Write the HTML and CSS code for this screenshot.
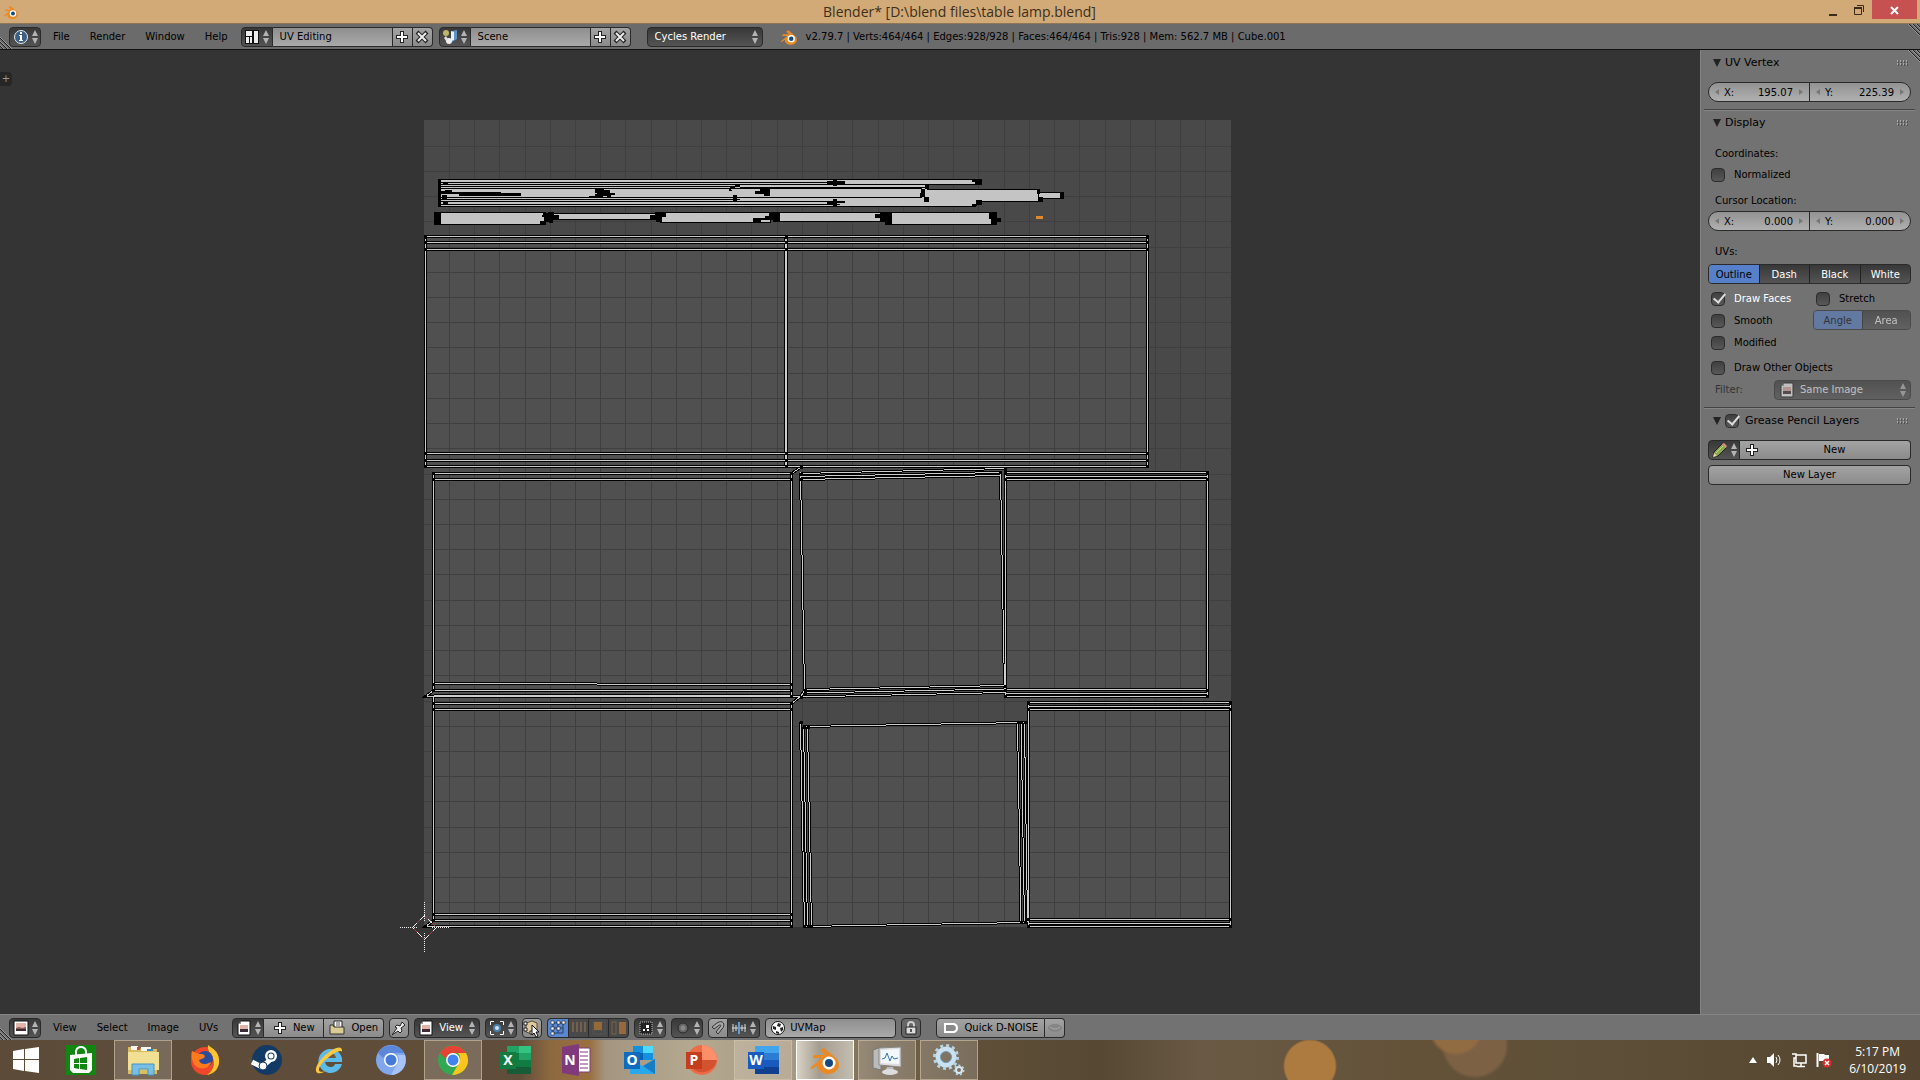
FILE: index.html
```html
<!DOCTYPE html>
<html lang="en">
<head>
<meta charset="utf-8">
<title>Blender* [D:\blend files\table lamp.blend]</title>
<link rel="stylesheet" href="styles.css">
</head>
<body>
<svg class="defs" aria-hidden="true">
  <symbol id="updown" viewBox="0 0 6 14"><path d="M3 0L6 6H0zM0 8H6L3 14z" fill="#b4b4b4"/></symbol>
  <symbol id="plus" viewBox="0 0 14 14"><path d="M5 1h4v4h4v4H9v4H5V9H1V5h4z" fill="#222"/><path d="M6 2h2v4h4v2H8v4H6V8H2V6h4z" fill="#fff"/></symbol>
  <symbol id="cross" viewBox="0 0 14 14"><path d="M2 2l10 10M12 2L2 12" stroke="#222" stroke-width="4"/><path d="M3 3l8 8M11 3l-8 8" stroke="#eee" stroke-width="2"/></symbol>
  <symbol id="blender" viewBox="0 0 32 32"><path d="M1 24L13 14H4l1-3h11l-5-5 4-2 12 10c4 4 4 10 0 13-4 4-12 4-16 0-2-2-3-4-2-6l-6 4z" fill="#e98a26"/><circle cx="20" cy="19" r="6.500" fill="#fff"/><circle cx="20" cy="19" r="4" fill="#174a7c"/></symbol>
  <symbol id="image" viewBox="0 0 16 16"><path d="M1 1h14v14H1z" fill="#fff" stroke="#111"/><path d="M3 3h10v5H3z" fill="#e3b3a9"/><path d="M3 8h10v3H3z" fill="#3c2b35"/><path d="M3 8l3-1 3 1 4-1v2H3z" fill="#8a5a57"/></symbol>
  <symbol id="imagefile" viewBox="0 0 16 16"><path d="M5 1h9v14H2V4z" fill="#fff" stroke="#111"/><path d="M4 5h8v4H4z" fill="#e3b3a9"/><path d="M4 9h8v3H4z" fill="#3c2b35"/><path d="M5 1v3H2z" fill="#999"/></symbol>
  <symbol id="grip" viewBox="0 0 12 12"><path d="M0 1l11 11M0 5l7 7M0 9l3 3" stroke="#222"/><path d="M0 0l12 12M0 4l8 8M0 8l4 4" stroke="#aaa" stroke-width=".7"/></symbol>
  <symbol id="gripup" viewBox="0 0 12 12"><path d="M1 0l11 11M5 0l7 7M9 0l3 3" stroke="#222"/><path d="M0 0l12 12M4 0l8 8M8 0l4 4" stroke="#aaa" stroke-width=".7"/></symbol>
  <symbol id="dots" viewBox="0 0 12 6"><path d="M0 1h1m2 0h1m2 0h1m2 0h1M0 4h1m2 0h1m2 0h1m2 0h1" stroke="#ddd" stroke-width="1"/><path d="M1 2h1m2 0h1m2 0h1m2 0h1M1 5h1m2 0h1m2 0h1m2 0h1" stroke="#333"/></symbol>
</svg>

<header class="titlebar">
  <svg class="i16"><use href="#blender"/></svg>
  <h1>Blender* [D:\blend files\table lamp.blend]</h1>
  <div class="winbtns">
    <button aria-label="Minimize"><svg width="10" height="12"><path d="M1 10h8v2H1z" fill="#3a2c1a"/></svg></button>
    <button aria-label="Restore"><svg width="10" height="10"><path d="M.5 2.500h7v7h-7zM3 .5h6.500V7" fill="none" stroke="#3a2c1a"/><path d="M0 2h8v2H0z" fill="#3a2c1a"/></svg></button>
    <button class="close" aria-label="Close"><svg width="10" height="10"><path d="M1 2l7 7M8 2L1 9" stroke="#fff" stroke-width="2"/></svg></button>
  </div>
</header>

<div class="bar info">
  <svg class="grip left"><use href="#grip"/></svg>
  <button class="dark picker" aria-label="Editor type: Info"><svg class="i16" viewBox="0 0 16 16"><circle cx="8" cy="8" r="6.500" fill="#3c6085" stroke="#dfe8f0"/><path d="M6 6h3v5h1v1H6v-1h1V7H6zM7 3h2v2H7z" fill="#fff"/></svg><svg class="ud"><use href="#updown"/></svg></button>
  <nav class="menus"><button>File</button><button>Render</button><button>Window</button><button>Help</button></nav>
  <div class="group">
    <button class="dark picker" aria-label="Screen layout"><svg class="i16" viewBox="0 0 16 16"><path d="M1 1h14v14H1z" fill="#111"/><path d="M2 2h6v5H2zM2 8h3v6H2zM6 8h2v6H6zM10 2h4v12h-4z" fill="#eee"/></svg><svg class="ud"><use href="#updown"/></svg></button>
    <input class="field name" aria-label="Screen name" value="UV Editing">
    <button class="light sq" aria-label="Add screen"><svg class="i14"><use href="#plus"/></svg></button>
    <button class="light sq" aria-label="Delete screen"><svg class="i14"><use href="#cross"/></svg></button>
  </div>
  <div class="group scene">
    <button class="dark picker" aria-label="Scene"><svg class="i16" viewBox="0 0 16 16"><circle cx="4" cy="4" r="3" fill="#bdb76a"/><path d="M10 2l5-1v9l-5 3z" fill="#5f93c4"/><path d="M9 2l3 1v8l-3 1z" fill="#e6f1fb"/><circle cx="7" cy="12" r="3" fill="#eee"/><path d="M2 9l2-2 2 3-2 2z" fill="#ddd"/></svg><svg class="ud"><use href="#updown"/></svg></button>
    <input class="field name" aria-label="Scene name" value="Scene">
    <button class="light sq" aria-label="Add scene"><svg class="i14"><use href="#plus"/></svg></button>
    <button class="light sq" aria-label="Delete scene"><svg class="i14"><use href="#cross"/></svg></button>
  </div>
  <div class="dark drop engine"><select aria-label="Render engine"><option>Cycles Render</option></select><svg class="ud"><use href="#updown"/></svg></div>
  <svg class="i18 logo"><use href="#blender"/></svg>
  <p class="stats">v2.79.7 | Verts:464/464 | Edges:928/928 | Faces:464/464 | Tris:928 | Mem: 562.7 MB | Cube.001</p>
  <svg class="grip right"><use href="#gripup"/></svg>
</div>

<div class="work">
  <main class="canvas">
    <button class="toolshelf" aria-label="Open tool shelf">+</button>
    <svg class="uv" viewBox="0 50 1700 964" role="img" aria-label="UV layout">
      <path fill="#494949" d="M424 120h807v807H424z"/>
      <path fill="#505050" d="M425 236H1147V467H425zM433 467H792V927H433zM800 473L1005 469V692L805 697zM1005 473h203v224h-203zM804 727l220-4 4 200-220 4zM1028 703h203v224h-203z"/>
      <path class="gridlines" d="M449.500 120v807M474.500 120v807M499.500 120v807M525.500 120v807M550.500 120v807M575.500 120v807M600.500 120v807M625.500 120v807M651.500 120v807M676.500 120v807M701.500 120v807M726.500 120v807M751.500 120v807M777.500 120v807M802.500 120v807M827.500 120v807M852.500 120v807M878.500 120v807M903.500 120v807M928.500 120v807M953.500 120v807M978.500 120v807M1004.500 120v807M1029.500 120v807M1054.500 120v807M1079.500 120v807M1105.500 120v807M1130.500 120v807M1155.500 120v807M1180.500 120v807M1205.500 120v807M424 146.500h807M424 171.500h807M424 196.500h807M424 221.500h807M424 247.500h807M424 272.500h807M424 297.500h807M424 322.500h807M424 347.500h807M424 373.500h807M424 398.500h807M424 423.500h807M424 448.500h807M424 474.500h807M424 499.500h807M424 524.500h807M424 549.500h807M424 574.500h807M424 600.500h807M424 625.500h807M424 650.500h807M424 675.500h807M424 701.500h807M424 726.500h807M424 751.500h807M424 776.500h807M424 801.500h807M424 827.500h807M424 852.500h807M424 877.500h807M424 902.500h807"/>
      <defs><path id="edges" d="M425.500 236.500H1147.500V466.500H425.500zM425.500 242.500H1147.500M425.500 249.500H1147.500M425.500 453.500H1147.500M425.500 460.500H1147.500M785.500 236V467M786.500 236V467
        M791.500 473.500H433.500V690.500L425.500 696.500H800.500M433.500 479.500H791.500M791.500 473.500V696.500M791.500 473.500L800.500 467.500M433.500 683.500H597M597 684.500H791.500M433.500 690.500H791.500M433.500 695.500H791.500M800.500 696.500L791.500 703.500H433.500M433.500 709.500H791.500M433.500 696.500V920.500L425.500 926.500H791.500M791.500 703.500V926.500M433.500 914.500H791.500M433.500 920.500H791.500
        M800.500 473.500L1005.500 468.500M800.500 476.500L1000.500 472.500M800.500 479.500L1000.500 475.500M800.500 472.500L804.500 690.500L800.500 697M1000.500 472.500L1004.500 690M804.500 689.500L1005.500 685.500M804.500 693L1005.500 689M800.500 697L1005.500 692.500
        M1005.500 472.500H1207.500V696.500H1005.500zM1005.500 476.500H1207.500M1005.500 479.500H1207.500M1005.500 689.500H1207.500M1005.500 693.500H1207.500
        M800.500 722V724L804.500 926.500L1024.500 922.500M803.500 726.500L1024.500 722.500M803.500 726.500L807.500 926.500M807.500 726.500L811.500 926.500M1017.500 722.500L1021 922.500M1021 722.500L1024.500 922.500M1024.500 722.500L1027.500 922.500
        M1028.500 702.500H1230.500V926.500H1028.500zM1028.500 706.500H1230.500M1028.500 709.500H1230.500M1028.500 919.500H1230.500M1028.500 923.500H1230.500"/></defs>
      <use href="#edges" class="edge-outer"/><use href="#edges" class="edge-inner"/>
      <path class="vertex" d="M425 237h0M425 242h0M425 249h0M425 453h0M425 460h0M425 466h0M786 237h0M786 242h0M786 249h0M786 453h0M786 460h0M786 466h0M1147 237h0M1147 242h0M1147 249h0M1147 453h0M1147 460h0M1147 466h0M433 473h0M433 479h0M791 473h0M791 479h0M433 684h0M433 690h0M425 696h0M791 684h0M791 690h0M791 696h0M801 697h0M433 703h0M433 709h0M791 703h0M791 709h0M433 914h0M433 920h0M425 926h0M791 914h0M791 920h0M791 926h0M801 467h0M801 474h0M801 479h0M805 690h0M805 693h0M1000 472h0M1005 469h0M1005 473h0M1005 479h0M1005 686h0M1005 690h0M1005 696h0M1207 473h0M1207 479h0M1207 690h0M1207 696h0M801 722h0M804 727h0M808 727h0M804 926h0M808 926h0M811 926h0M1018 722h0M1021 722h0M1025 722h0M1021 922h0M1025 922h0M1028 703h0M1028 709h0M1028 919h0M1028 926h0M1230 703h0M1230 709h0M1230 919h0M1230 926h0"/>
      <path class="strip" d="M439.500 179.500H981.500V184.500H927.500V189.500H1038.500V192.500H1062.500V198.500H1041.500V201.500H980.500L975.500 206.500H439.500z"/>
      <path class="stripline" d="M440 182.500H840M440 184.500H980M440 186.500H740M740 187.500H927M440 188.500H922M440 197.500H922M440 199.500H740M440 201.500H840M440 204.500H840M1038.500 190V201"/>
      <path class="strip" d="M435.500 212.500H545.500V224.500H435.500zM550.500 213.500H658.500V219.500H550.500zM660.500 212.500H770.500V222.500H660.500zM779.500 212.500H880.500V221.500H779.500zM889.500 212.500H992.500V224.500H889.500z"/>
      <path d="M438 179h3v28h-3zM443 182h5v2h-5zM445 190h7v2h49v1h20v3h-62v-2h-18v-3h4zM442 195h5v4h-5zM443 202h5v3h-5zM595 189h4l5-1v2h6v3h5v2h-4v3h-4v-2h-4v1h-6v-4h-2zM588 196h7v-2h3v3h-8zM730 187h10v-2h-5v3h-6v3h3zM733 195h4v6h-4zM755 191h5v-2h10v7h-6v-2h-9zM827 181h6v-2h4v2h8v3h-8v2h-4v-2h-6zM827 201h6v-2h4v2h8v2h-8v3h-4v-2h-6zM972 179h10v5h-7v-2h-3zM921 189h4v8h-5v-4h1zM924 197h5v5h-5zM925 185h4v4h-4zM1037 189h3v5h-3zM1039 197h4v5h-4zM1060 192h4v7h-4zM972 204h4v-4h6v5h-6v2h-4zM434 212h7v13h-7zM543 213h5v-1h6v3h5v4h-6v4h-4v-1h-4v3h-5v-4h4v-4h-2zM650 215h5v-3h11v5h-4v5h-6v-3h-6zM753 218h12v-2h4v-4h11v10h-7v-2h-12v2h-8zM875 214h5v-2h12v13h-7v-3h-5v-4h-5zM989 212h8v6h4v4h-4v3h-6v-6h-2z"/>
      <path d="M1036 216h7v3h-7z" fill="#e18a2d"/>
      <g class="cursor"><path d="M412.500 927.500l12-12 12 12-12 12z" stroke="#a33c3c"/><path d="M412.500 927.500l12-12 12 12-12 12z" stroke="#eee" stroke-dasharray="6 5"/><path d="M400 927.500H417M432 927.500H450M424.500 902V922M424.500 933V952" stroke="#eee" stroke-dasharray="1 1"/></g>
    </svg>
  </main>

  <aside class="props">
    <svg class="grip right"><use href="#gripup"/></svg>
    <section>
      <h2><span class="tri"></span>UV Vertex<svg class="dots"><use href="#dots"/></svg></h2>
      <div class="pair first"><label>X:<input value="195.07"></label><label>Y:<input value="225.39"></label></div>
    </section>
    <section>
      <h2><span class="tri"></span>Display<svg class="dots"><use href="#dots"/></svg></h2>
      <p class="cap">Coordinates:</p>
      <label class="check"><input type="checkbox">Normalized</label>
      <p class="cap low">Cursor Location:</p>
      <div class="pair"><label>X:<input value="0.000"></label><label>Y:<input value="0.000"></label></div>
      <p class="cap uvs">UVs:</p>
      <div class="seg"><label><input type="radio" name="edge" checked><span>Outline</span></label><label><input type="radio" name="edge"><span>Dash</span></label><label><input type="radio" name="edge"><span>Black</span></label><label><input type="radio" name="edge"><span>White</span></label></div>
      <div class="cols">
        <div><label class="check on"><input type="checkbox" checked>Draw Faces</label><label class="check"><input type="checkbox">Smooth</label><label class="check"><input type="checkbox">Modified</label></div>
        <div class="side"><label class="check"><input type="checkbox">Stretch</label><div class="seg off"><label><input type="radio" name="stretch" checked disabled><span>Angle</span></label><label><input type="radio" name="stretch" disabled><span>Area</span></label></div></div>
      </div>
      <label class="check other"><input type="checkbox">Draw Other Objects</label>
      <div class="filter"><label for="filter">Filter:</label><div class="dark drop"><svg class="i16"><use href="#imagefile"/></svg><select id="filter" disabled><option>Same Image</option></select><svg class="ud"><use href="#updown"/></svg></div></div>
    </section>
    <section>
      <h2><span class="tri"></span><label><input type="checkbox" checked>Grease Pencil Layers</label><svg class="dots"><use href="#dots"/></svg></h2>
      <div class="group pencil"><button class="dark picker" aria-label="Grease pencil data"><svg class="i16" viewBox="0 0 16 16"><path d="M1 15l1-5L11 1l4 4-9 9z" fill="#88a850" stroke="#222"/><path d="M10 2l2-1 3 3-1 2z" fill="#e08b87"/><path d="M1 15l1-4 3 3z" fill="#eed4a2"/><path d="M4 11l7-7" stroke="#c5d989"/></svg><svg class="ud"><use href="#updown"/></svg></button><button class="light grow"><svg class="i14"><use href="#plus"/></svg><span>New</span></button></div>
      <button class="light layer">New Layer</button>
    </section>
  </aside>
</div>

<footer class="bar imagebar">
  <svg class="grip left"><use href="#grip"/></svg>
  <button class="dark picker" aria-label="Editor type: UV/Image"><svg class="i16"><use href="#image"/></svg><svg class="ud"><use href="#updown"/></svg></button>
  <nav class="menus"><button>View</button><button>Select</button><button>Image</button><button>UVs</button></nav>
  <div class="group">
    <button class="dark picker" aria-label="Browse image"><svg class="i16"><use href="#imagefile"/></svg><svg class="ud"><use href="#updown"/></svg></button>
    <button class="light w60"><svg class="i14"><use href="#plus"/></svg><span>New</span></button>
    <button class="light w60"><svg class="i16" viewBox="0 0 16 16"><path d="M5 1h8v9H5z" fill="#fff" stroke="#222"/><path d="M7 3h4M7 5h4" stroke="#555"/><path d="M1 5h3l1 2h10v7H1z" fill="#d8cb94" stroke="#333"/></svg><span>Open</span></button>
  </div>
  <button class="light sq round" aria-label="Pin"><svg class="i16" viewBox="0 0 16 16"><path d="M1 15l5-7-2-1 2-2 3 1 2-4 3 3-4 3 1 3-2 2-2-2z" fill="#eee" stroke="#222"/></svg></button>
  <div class="dark drop view"><svg class="i16"><use href="#imagefile"/></svg><select aria-label="Mode"><option>View</option></select><svg class="ud"><use href="#updown"/></svg></div>
  <button class="dark picker" aria-label="Pivot"><svg class="i16" viewBox="0 0 16 16"><path d="M1.500 5V1.500H5M11 1.500h3.500V5M14.500 11v3.500H11M5 14.500H1.500V11" fill="none" stroke="#fff"/><circle cx="8" cy="8" r="3" fill="#cfe0ee" stroke="#4b7ea8" stroke-width="2"/></svg><svg class="ud"><use href="#updown"/></svg></button>
  <button class="light sq round" aria-label="Sync selection"><svg class="i18" viewBox="0 0 18 18"><path d="M3 4l6-2 5 2v9l-5 2-6-2z" fill="#ddc79b" stroke="#604c30"/><path d="M1 3h3v3H1zM1 9h3v3H1zM7 12h3v3H7z" fill="#fff" stroke="#222"/><path d="M9 6l7 7h-3l2 4-2 1-2-4-2 2z" fill="#fff" stroke="#111"/></svg></button>
  <div class="group modes">
    <button class="active" aria-label="Vertex"><svg class="i16" viewBox="0 0 16 16"><path d="M3 3h10v10H3zM8 3v10M3 8h10" fill="none" stroke="#24436e"/><path d="M1 1h3v3H1zM7 1h3v3H7zM1 7h3v3H1zM7 7h3v3H7zM12 1h3v3h-3zM1 12h3v3H1z" fill="#fff" stroke="#222" stroke-width=".6"/></svg></button>
    <button aria-label="Edge"><svg class="i16" viewBox="0 0 16 16"><path d="M2 2v10M6 2v10M10 2v10M14 2v10" stroke="#a27950"/></svg></button>
    <button aria-label="Face"><svg class="i16" viewBox="0 0 16 16"><path d="M2 2h12v12H2zM10 2v12M2 10h12" fill="none" stroke="#555"/><path d="M3 2h8v8H3z" fill="#96693b"/></svg></button>
    <button aria-label="Island"><svg class="i16" viewBox="0 0 16 16"><path d="M8 2h7v12H8z" fill="#97683c"/><path d="M1 2h4v12H1z" fill="none" stroke="#80633f"/></svg></button>
  </div>
  <button class="dark picker" aria-label="Sticky selection"><svg class="i16" viewBox="0 0 16 16"><path d="M2 2h12v12H2z" fill="#222" stroke="#bbb" stroke-dasharray="1 1"/><path d="M5 9h2v2H5zM8 5h3v3H8zM9 9h2v2H9z" fill="#fff"/></svg><svg class="ud"><use href="#updown"/></svg></button>
  <button class="dark picker" aria-label="Proportional editing"><svg class="i16" viewBox="0 0 16 16"><circle cx="8" cy="8" r="5" fill="#666" stroke="#292929"/><circle cx="8" cy="8" r="2.500" fill="#888"/></svg><svg class="ud"><use href="#updown"/></svg></button>
  <div class="group">
    <button class="light sq" aria-label="Snap"><svg class="i16" viewBox="0 0 16 16"><path d="M2 7l5-4c6-4 9 2 5 6l-4 5-2-2 4-5c2-2 0-3-2-1L4 9z" fill="#aaa" stroke="#333"/></svg></button>
    <button class="dark picker" aria-label="Snap element"><svg class="i16" viewBox="0 0 16 16"><path d="M1 8h14M2 4v8M5 5v6M11 5v6M14 4v8" stroke="#ddd"/><path d="M8 2v12" stroke="#5e9dd8" stroke-width="2"/></svg><svg class="ud"><use href="#updown"/></svg></button>
  </div>
  <label class="field uvmap"><svg class="i16" viewBox="0 0 16 16"><circle cx="8" cy="8" r="6.500" fill="#fff" stroke="#111"/><path d="M8 3l3 1-1 3-3-1zM3 6l3 1v3L3 9zM10 8l3-1v3l-2 2zM6 11l3 1v2L6 13z" fill="#222"/></svg><input aria-label="UV map" value="UVMap"></label>
  <button class="dark sq round lock" aria-label="Lock"><svg class="i16" viewBox="0 0 16 16"><path d="M5 8V5a3 3 0 0 1 6 0v3" fill="none" stroke="#ccc" stroke-width="2"/><path d="M3 7h10v7H3z" fill="#ddd" stroke="#222"/><path d="M7 9h2v3H7z" fill="#555"/></svg></button>
  <div class="group noise">
    <button class="light"><svg class="i16" viewBox="0 0 16 16"><path d="M2 4h9q3 1 3 4t-3 4H2z" fill="#888" stroke="#fff" stroke-width="2"/></svg><span>Quick D-NOISE</span></button>
    <button class="light sq" aria-label="Denoise"><svg class="i16" viewBox="0 0 16 16"><ellipse cx="8" cy="8" rx="7" ry="4" fill="#858585"/><path d="M3 7q5 4 10 0" fill="none" stroke="#aaa"/></svg></button>
  </div>
</footer>

<nav class="taskbar" aria-label="Taskbar">
  <button class="start" aria-label="Start"><svg width="26" height="26" viewBox="0 0 26 26"><path d="M0 4l11-2v10H0zM12 2l14-2v12H12zM0 13h11v11L0 22zM12 13h14v13l-14-2z" fill="#fff"/></svg></button>
  <div class="apps">
    <button aria-label="Store"><svg viewBox="0 0 32 32"><path d="M1 1h30v30H1z" fill="#118610"/><path d="M5 11l22-2v17l-3 3H8l-3-3z" fill="#fff"/><path d="M11 12V7q1-4 5-4t5 4v3" fill="none" stroke="#fff" stroke-width="2"/><path d="M9 15l5-1v5H9zM15 14l7-1v6h-7zM9 20h5v5l-5-1zM15 20h7v6l-7-1z" fill="#118610"/></svg></button>
    <button class="open" aria-label="File Explorer"><svg viewBox="0 0 32 32"><path d="M1 3h11l2 2h16v25H1z" fill="#d9bd63"/><path d="M4 2h7v4H4zM14 3h10v4H14z" fill="#f7f7f0"/><path d="M10 3h3v3h-3z" fill="#c44b36"/><path d="M20 5h6v2h-6z" fill="#3b86b5"/><path d="M1 8h31v18H1z" fill="#f1df94"/><path d="M5 31V20h22v11h-6v-6h-9v6z" fill="#79bfe4" stroke="#4594c1"/></svg></button>
    <button aria-label="Firefox"><svg viewBox="0 0 32 32"><circle cx="16" cy="17" r="14" fill="#f0462c"/><path d="M19 1c5 4 10 6 11 14s-4 15-12 16c7-5 8-11 6-17-2-5-6-7-5-13z" fill="#ffc52e"/><circle cx="16" cy="15" r="8" fill="#2b4c9c"/><path d="M3 7c3 1 5 3 9 3 3 0 5 2 3 4l-5 2c1 5 7 5 12 2-1 8-15 9-18 0-2-4-2-8-1-11z" fill="#ff7a1c"/></svg></button>
    <button aria-label="Steam"><svg viewBox="0 0 32 32"><circle cx="16" cy="16" r="15" fill="#123a65"/><path d="M1 18l10 5 9-8" stroke="#fff" stroke-width="5" fill="none"/><circle cx="20" cy="12" r="6" fill="#fff"/><circle cx="20" cy="12" r="3.500" fill="#123a65"/><circle cx="20" cy="12" r="2.500" fill="#fff"/><circle cx="12" cy="22" r="4" fill="#fff" stroke="#123a65"/></svg></button>
    <button aria-label="Internet Explorer"><svg viewBox="0 0 32 32"><path d="M29 20a12 12 0 1 1 0-6v4H12q1 5 6 5 3 0 4-3z" fill="#5cbbe9"/><path d="M12 14h11q-1-5-5-5-5 0-6 5z" fill="#6a5b46"/><path d="M29 8c1-7-7-5-14 1C8 14 2 22 3 27c1 4 7 2 10 0-12 4-7-7 3-14 5-4 12-8 13-5z" fill="#ffc73c"/></svg></button>
    <button aria-label="Chromium"><svg viewBox="0 0 32 32"><circle cx="16" cy="16" r="15" fill="#80a6ec"/><path d="M3 9a15 15 0 0 1 26 0H16q-6 0-8 5z" fill="#5b86d9"/><path d="M30 11c3 10-4 20-14 20l6-11q4-5 0-9z" fill="#a8c3f8"/><circle cx="16" cy="16" r="7" fill="#fff"/><circle cx="16" cy="16" r="5.500" fill="#457ad9"/></svg></button>
    <button class="open" aria-label="Chrome"><svg viewBox="0 0 32 32"><circle cx="16" cy="16" r="15" fill="#33a852"/><path d="M3 9a15 15 0 0 1 26 0H16q-6 0-7 6z" fill="#e54334"/><path d="M29 9c6 11-2 22-14 22l7-12q3-5-1-10z" fill="#fbc51d"/><circle cx="16" cy="16" r="7" fill="#fff"/><circle cx="16" cy="16" r="5.500" fill="#4382f0"/></svg></button>
    <button aria-label="Excel"><svg viewBox="0 0 32 32"><path d="M8 2h24v28H8z" fill="#107c41"/><path d="M8 2h12v7H8z" fill="#21a366"/><path d="M20 2h12v7H20z" fill="#33c481"/><path d="M20 9h12v7H20z" fill="#21a366"/><path d="M8 23h24v7H8z" fill="#185c37"/><path d="M1 8h16v17H1z" fill="#107c41"/><text x="9" y="21">X</text></svg></button>
    <button aria-label="OneNote"><svg viewBox="0 0 32 32"><path d="M17 4h12v24H17z" fill="#fff" stroke="#80397b"/><path d="M19 8h8M19 12h8M19 16h8M19 20h8M19 24h8" stroke="#80397b"/><path d="M1 3l17-3v32L1 29z" fill="#80397b"/><text x="9" y="21">N</text></svg></button>
    <button aria-label="Outlook"><svg viewBox="0 0 32 32"><path d="M10 2h20v14H10z" fill="#1490df"/><path d="M20 2h10v7H20z" fill="#50d9ff"/><path d="M10 9h10v7H10z" fill="#0364b8"/><path d="M7 16l13 6 12-7v15H7z" fill="#28a8ea"/><path d="M32 15v15L20 22z" fill="#147dc5"/><path d="M1 8h16v17H1z" fill="#0f6cbd"/><text x="9" y="21">O</text></svg></button>
    <button aria-label="PowerPoint"><svg viewBox="0 0 32 32"><circle cx="17" cy="16" r="15" fill="#ed6c47"/><path d="M17 1a15 15 0 0 1 15 15H17z" fill="#ff8f6b"/><path d="M3 16h29a15 15 0 0 1-29 2z" fill="#d35230"/><path d="M1 8h16v17H1z" fill="#c43e1c"/><text x="9" y="21">P</text></svg></button>
    <button class="open" aria-label="Word"><svg viewBox="0 0 32 32"><path d="M8 2h24v28H8z" fill="#185abd"/><path d="M8 2h24v7H8z" fill="#41a5ee"/><path d="M8 9h24v7H8z" fill="#2b7cd3"/><path d="M8 23h24v7H8z" fill="#103f91"/><path d="M1 8h16v17H1z" fill="#185abd"/><text x="9" y="21">W</text></svg></button>
    <button class="open current" aria-label="Blender"><svg viewBox="0 0 32 32"><use href="#blender"/></svg></button>
    <button class="open" aria-label="Resource Monitor"><svg viewBox="0 0 32 32"><path d="M2 6l8-3v23l-8-2z" fill="#bbb" stroke="#777"/><path d="M8 4l22-1v20L8 21z" fill="#ddd" stroke="#888"/><path d="M10 6l18-1v15l-18-1z" fill="#f3f8fc"/><path d="M11 15l3-1 2-5 3 8 2-5 2 3 4-1" fill="none" stroke="#3576b3"/><path d="M16 23h6l1 4H14z" fill="#bbb"/><ellipse cx="19" cy="28" rx="8" ry="3" fill="#ddd"/></svg></button>
    <button class="open" aria-label="Settings"><svg viewBox="0 0 32 32"><circle cx="13" cy="13" r="8" fill="none" stroke="#c9e1f0" stroke-width="5"/><circle cx="13" cy="13" r="11.500" fill="none" stroke="#b5d5e5" stroke-width="3" stroke-dasharray="3 3"/><circle cx="13" cy="13" r="5.500" fill="none" stroke="#6e9ab7"/><circle cx="26" cy="26" r="3" fill="none" stroke="#d9ecf6" stroke-width="2"/><circle cx="26" cy="26" r="4.500" fill="none" stroke="#b9d8e8" stroke-width="2" stroke-dasharray="2 2"/></svg></button>
  </div>
  <div class="tray">
    <svg width="8" height="6" viewBox="0 0 8 6"><path d="M4 0l4 6H0z" fill="#fff"/></svg>
    <svg width="16" height="16" viewBox="0 0 16 16"><path d="M1 5h3l4-4v14l-4-4H1z" fill="#fff"/><path d="M10 5q2 3 0 6M12 3q4 5 0 10" fill="none" stroke="#fff"/></svg>
    <svg width="16" height="16" viewBox="0 0 16 16"><path d="M5 3h10v8H5zM10 11v3M6 14.500h8M1 2h4v4H3v8h3" fill="none" stroke="#fff" stroke-width="1.500"/></svg>
    <svg width="16" height="16" viewBox="0 0 16 16"><path d="M1.500 1v14" stroke="#fff" stroke-width="2"/><path d="M3 2h5l1 1h4v6H3z" fill="#fff"/><circle cx="11" cy="11" r="4.500" fill="#d92b2b"/><path d="M9 9l4 4M13 9l-4 4" stroke="#fff" stroke-width="1.500"/></svg>
    <p class="clock"><time>5:17 PM</time><time>6/10/2019</time></p>
  </div>
</nav>
</body>
</html>
```

FILE: styles.css
```css
* { box-sizing: border-box; }
body {
  margin: 0;
  min-height: 100vh;
  display: flex;
  flex-direction: column;
  background: #343434;
  color: #000;
  font: 10px/20px "DejaVu Sans", sans-serif;
}
h1, h2, p { margin: 0; font-weight: 400; }
button, input, select { font: inherit; color: inherit; margin: 0; padding: 0; border: 0; background: none; }
button { display: flex; align-items: center; justify-content: center; white-space: nowrap; }
svg { flex: none; display: block; }
.defs { position: absolute; width: 0; height: 0; }
.i14 { width: 14px; height: 14px; }
.i16 { width: 16px; height: 16px; }
.i18 { width: 18px; height: 18px; }
.ud { width: 6px; height: 14px; }

.titlebar {
  height: 24px;
  display: flex;
  align-items: center;
  padding-left: 3px;
  background: #d1aa77;
  border-bottom: 1px solid #8f7656;
}
.titlebar h1 { flex: 1; text-align: center; font: 14px/22px "Open Sans", sans-serif; color: #3d2e1b; padding-left: 80px; }
.winbtns { display: flex; align-self: flex-start; }
.winbtns button { width: 26px; height: 19px; }
.winbtns .close { width: 45px; margin-right: 3px; background: #c75050; }

.bar {
  position: relative;
  display: flex;
  align-items: center;
  height: 26px;
  padding-left: 9px;
  background: #727272;
}
.info { background: #6b6b6b; border-bottom: 1px solid #111; }
.imagebar { border-top: 1px solid #858585; gap: 5px; }
.grip { position: absolute; width: 12px; height: 12px; }
.grip.left { left: 0; bottom: 0; }
.grip.right { right: 0; top: 0; }
.menus { display: flex; gap: 20px; padding: 0 13px 0 12px; }

.dark, .light, .field, .modes, .pair, .seg { border: 1px solid #2a2a2a; height: 20px; }
.dark { background: linear-gradient(#383838, #545454); color: #fff; border-radius: 4px; }
.light { background: linear-gradient(#a3a3a3, #8b8b8b); border-radius: 4px; }
.field { background: linear-gradient(#8f8f8f, #a9a9a9); border-radius: 4px; padding: 0 7px; }
.picker { width: 32px; gap: 3px; }
.sq { width: 20px; }
.group { display: flex; }
.group > * { border-radius: 0; }
.group > * + * { border-left: 0; }
.group > :first-child { border-radius: 4px 0 0 4px; }
.group > :last-child { border-radius: 0 4px 4px 0; }
.name { width: 120px; }
.scene { margin-left: 6px; }
.drop { display: flex; align-items: center; padding-right: 4px; }
.drop select { appearance: none; flex: 1; min-width: 0; line-height: 18px; opacity: 1; }
.engine { width: 116px; margin-left: 16px; padding-left: 7px; }
.logo { margin: 0 8px 0 17px; }
.stats { white-space: nowrap; }

.w60 { width: 60px; gap: 6px; }
.imagebar .menus { padding: 0 9px 0 7px; }
.view { width: 66px; padding-left: 3px; gap: 5px; }
.modes { border-radius: 4px; overflow: hidden; background: #494949; }
.modes button { width: 20px; border-radius: 0; }
.modes button + button { border-left: 1px solid #2a2a2a; }
.modes .active { background: #5b87cf; }
.uvmap { width: 131px; padding: 0 4px; display: flex; align-items: center; gap: 4px; }
.uvmap input { min-width: 0; flex: 1; }
.lock { background: #666; }
.noise { margin-left: 10px; }
.noise .light:first-child { width: 109px; gap: 5px; }

.work { flex: 1; display: flex; min-height: 0; }
.canvas { flex: 1; min-width: 0; position: relative; background: #343434; }
.toolshelf { position: absolute; left: 0; top: 22px; width: 12px; height: 14px; border-radius: 0 4px 4px 0; background: #262626; color: #999; }
.uv { position: absolute; width: 100%; height: 100%; shape-rendering: crispEdges; }
.gridlines { stroke: #3f3f3f; }
.edge-outer { fill: none; stroke: #000; stroke-width: 3; }
.edge-inner { fill: none; stroke: #cdcdcd; stroke-width: 1; }
.vertex { stroke: #000; stroke-width: 3; stroke-linecap: square; }
.strip { fill: #c4c4c4; stroke: #000; }
.stripline { stroke: #000; }
.cursor { fill: none; }

.props { width: 220px; background: #727272; position: relative; border-left: 1px solid #828282; padding: 0 5px 0 3px; }
.props section { padding: 0 4px; border-bottom: 1px solid #444; box-shadow: 0 1px #858585; }
.props section:last-child { border: 0; box-shadow: none; }
.props h2 { display: flex; align-items: center; height: 26px; font-size: 11px; padding: 0 2px 0 5px; }
.tri { border: 4px solid transparent; border-top: 8px solid #222; border-bottom: 0; margin-right: 4px; }
.dots { width: 12px; height: 6px; margin-left: auto; }
.props h2 label { display: flex; align-items: center; gap: 6px; }
.pair { display: flex; border-radius: 10px; background: linear-gradient(#929292, #b0b0b0); }
.pair.first { margin: 6px 0 7px; }
.pair label { flex: 1; min-width: 0; display: flex; line-height: 19px; padding: 0 16px 0 15px; position: relative; }
.pair label + label { border-left: 1px solid #2a2a2a; }
.pair label::before, .pair label::after { content: ""; position: absolute; top: 6px; border: 3px solid transparent; }
.pair label::before { left: 3px; border-right: 4px solid #777; }
.pair label::after { right: 3px; border-left: 4px solid #777; }
.pair input { width: 100%; min-width: 0; text-align: right; }
.cap { padding: 8px 7px 0; height: 28px; }
.cap.low { padding-top: 5px; height: 25px; }
.cap.uvs { padding-top: 11px; height: 33px; }
.check { display: flex; align-items: center; gap: 9px; height: 22px; padding-left: 3px; white-space: nowrap; }
.check.on { color: #fff; }
input[type="checkbox"] { appearance: none; flex: none; width: 14px; height: 14px; border: 1px solid #2c2c2c; border-radius: 4px; background: linear-gradient(#404040, #585858); position: relative; }
input[type="checkbox"]:checked::after { content: ""; position: absolute; left: 4px; top: -2px; width: 5px; height: 10px; border: solid #ddd; border-width: 0 2px 2px 0; transform: rotate(40deg); }
.seg { display: flex; border-radius: 4px; overflow: hidden; background: linear-gradient(#383838, #545454); color: #fff; }
.seg label { flex: 1; position: relative; text-align: center; }
.seg label + label { border-left: 1px solid #222; }
.seg input { appearance: none; position: absolute; inset: 0; }
.seg span { position: relative; display: block; line-height: 19px; }
.seg input:checked { background: #5680c9; }
.seg input:checked + span { color: #000; }
.seg.off { opacity: .55; }
.cols { display: grid; grid-template-columns: 1fr 98px; padding-top: 4px; }
.other { margin-top: 3px; }
.filter { display: flex; align-items: center; padding: 0 0 7px 7px; margin-top: 1px; opacity: .55; }
.filter .drop { width: 137px; margin-left: auto; padding-left: 4px; gap: 5px; }
.pencil { margin-top: 6px; }
.grow { flex: 1; padding-left: 5px; }
.grow span { flex: 1; }
.layer { width: 100%; margin-top: 5px; }

.taskbar {
  height: 40px;
  display: flex;
  align-items: center;
  background:
    radial-gradient(circle at 1310px 26px, #ad7a40 0 25px, transparent 27px),
    radial-gradient(circle at 1456px -12px, #916b41 0 24px, transparent 28px),
    radial-gradient(circle at 1475px 5px, #7c6145 0 30px, transparent 34px),
    linear-gradient(90deg, #5c4b39 0, #604e3a 520px, #8d6840 550px, #9b7040 590px, #a39580 605px, #b4a88f 690px, #aa9c84 790px, #756650 880px, #5f4f39 980px, #574833 1100px, #6a5a45 1200px, #635238 1420px, #5e4f38 1600px, #554530 100%);
}
.start { width: 52px; height: 40px; }
.apps { display: flex; gap: 4px; }
.apps button { width: 58px; height: 40px; border: 1px solid transparent; }
.apps svg { width: 32px; height: 32px; }
.apps text { font: bold 14px "Open Sans", sans-serif; fill: #fff; text-anchor: middle; }
.apps .open { background: #ffffff2b; border-color: #d6c7ac99; }
.apps .current { background: linear-gradient(90deg, #d8d2c6, #a49c8e 40%, #c4beb0); border: 1px solid #fff; }
.tray { display: flex; align-items: center; gap: 9px; margin-left: auto; padding-right: 14px; }
.clock { display: flex; flex-direction: column; text-align: center; font: 12px/17px "Open Sans", sans-serif; color: #fff; padding-left: 8px; }
```
